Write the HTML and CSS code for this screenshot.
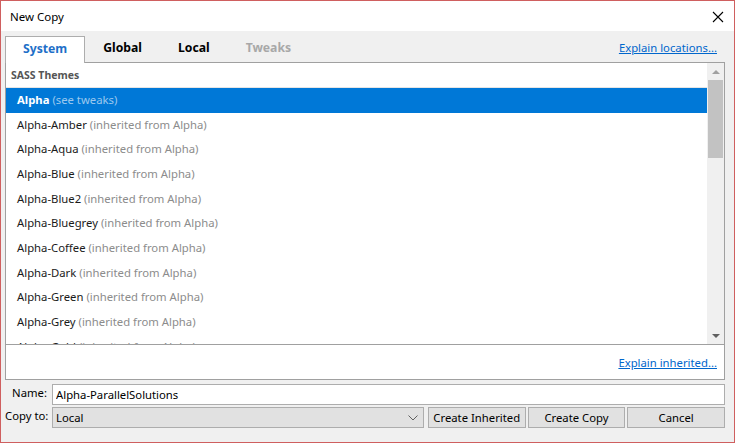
FILE: index.html
```html
<!DOCTYPE html>
<html lang="en">
  <head>
    <meta charset="UTF-8" />
    <title>New Copy</title>
    <link rel="stylesheet" href="styles.css">
  </head>
  <body>
    <div class="dialog">
      <div class="titlebar">
        <span class="title">New Copy</span>
        <span class="close">
          <svg width="12" height="12" viewBox="0 0 12 12">
            <path d="M1 1 L11 11 M11 1 L1 11" stroke="#000" stroke-width="1.1" fill="none" />
          </svg>
        </span>
      </div>

      <div class="content">
        <div class="tabs">
          <div class="tab active">System</div>
          <div class="tab">Global</div>
          <div class="tab">Local</div>
          <div class="tab disabled">Tweaks</div>
          <a class="link tabs-link" href="#">Explain locations...</a>
        </div>

        <div class="panel">
          <div class="listbox">
            <div class="list">
              <div class="list-header">SASS Themes</div>
              <div class="row selected"><span class="name">Alpha</span> <span class="note">(see tweaks)</span></div>
              <div class="row"><span class="name">Alpha-Amber</span> <span class="note">(inherited from Alpha)</span></div>
              <div class="row"><span class="name">Alpha-Aqua</span> <span class="note">(inherited from Alpha)</span></div>
              <div class="row"><span class="name">Alpha-Blue</span> <span class="note">(inherited from Alpha)</span></div>
              <div class="row"><span class="name">Alpha-Blue2</span> <span class="note">(inherited from Alpha)</span></div>
              <div class="row"><span class="name">Alpha-Bluegrey</span> <span class="note">(inherited from Alpha)</span></div>
              <div class="row"><span class="name">Alpha-Coffee</span> <span class="note">(inherited from Alpha)</span></div>
              <div class="row"><span class="name">Alpha-Dark</span> <span class="note">(inherited from Alpha)</span></div>
              <div class="row"><span class="name">Alpha-Green</span> <span class="note">(inherited from Alpha)</span></div>
              <div class="row"><span class="name">Alpha-Grey</span> <span class="note">(inherited from Alpha)</span></div>
              <div class="row"><span class="name">Alpha-Gold</span> <span class="note">(inherited from Alpha)</span></div>
            </div>
            <div class="scrollbar">
              <div class="arrow up"></div>
              <div class="track"><div class="thumb"></div></div>
              <div class="arrow down"></div>
            </div>
          </div>
          <div class="panel-foot">
            <a class="link" href="#">Explain inherited...</a>
          </div>
        </div>

        <div class="form">
          <div class="form-row">
            <label class="label">Name:</label>
            <input class="input" type="text" value="Alpha-ParallelSolutions" />
          </div>
          <div class="form-row">
            <label class="label">Copy to:</label>
            <div class="select">
              <span>Local</span>
              <svg width="10" height="6" viewBox="0 0 10 6">
                <path d="M0.5 0.5 L5 5 L9.5 0.5" stroke="#606060" stroke-width="1" fill="none" />
              </svg>
            </div>
            <button class="btn">Create Inherited</button>
            <button class="btn">Create Copy</button>
            <button class="btn">Cancel</button>
          </div>
        </div>
      </div>
    </div>
  </body>
</html>
```

FILE: styles.css
```css
* {
  margin: 0;
  padding: 0;
  box-sizing: border-box;
  font-family: "Noto Sans", "Open Sans", sans-serif;
}

body {
  background: #fff;
  font-size: 11.3px;
  color: #000;
}

.dialog {
  width: 735px;
  height: 443px;
  border: 1px solid #cf5f5f;
  display: flex;
  flex-direction: column;
  background: #f0f0f0;
}

.titlebar {
  height: 30px;
  background: #fff;
  display: flex;
  align-items: center;
  justify-content: space-between;
  padding: 0 10px 0 9px;
}

.title {
  font-size: 11.5px;
  color: #000;
}

.close {
  display: flex;
  margin-top: 1px;
}

.content {
  flex: 1;
  padding: 4px 9px 0 4px;
  display: flex;
  flex-direction: column;
}

/* tab strip */
.tabs {
  display: flex;
  align-items: flex-end;
  height: 27px;
}

.tab {
  height: 26px;
  padding: 0 18px 3px;
  font-weight: bold;
  font-size: 12.2px;
  display: flex;
  align-items: center;
  color: #000;
}

.tab.active {
  height: 27px;
  padding: 0 17px 3px;
  background: #fff;
  border: 1px solid #adadad;
  border-bottom: none;
  color: #1e70c8;
  margin-bottom: -1px;
  position: relative;
  z-index: 1;
}

.tab.disabled {
  color: #a8a8a8;
}

.link {
  color: #0066cc;
  text-decoration: underline;
  font-size: 11.3px;
}

.tabs-link {
  margin-left: auto;
  margin-right: 8px;
  align-self: center;
  margin-bottom: 2px;
}

/* tab page */
.panel {
  height: 318px;
  background: #fff;
  border: 1px solid #a0a0a0;
  display: flex;
  flex-direction: column;
}

.listbox {
  height: 282px;
  display: flex;
  border-bottom: 1px solid #a0a0a0;
}

.list {
  flex: 1;
  overflow: hidden;
}

.list-header {
  height: 25px;
  line-height: 24px;
  padding-left: 5px;
  font-size: 10.5px;
  font-weight: bold;
  color: #555;
  border-bottom: 1px solid #e5e5e5;
}

.row {
  height: 24.67px;
  line-height: 24px;
  padding-left: 11px;
  white-space: nowrap;
  color: #1a1a1a;
}

.row .note {
  color: #8c8c8c;
}

.row.selected {
  background: #0078d7;
  color: #fff;
}

.row.selected .name {
  font-weight: bold;
}

.row.selected .note {
  color: #9cc8ee;
}

.scrollbar {
  width: 17px;
  background: #f0f0f0;
  display: flex;
  flex-direction: column;
}

.arrow {
  height: 17px;
  display: flex;
  align-items: center;
  justify-content: center;
}

.arrow::before {
  content: "";
  border-left: 4px solid transparent;
  border-right: 4px solid transparent;
}

.arrow.up::before {
  border-bottom: 4px solid #a0a0a0;
}

.arrow.down::before {
  border-top: 4px solid #606060;
}

.track {
  flex: 1;
  padding: 0 1px;
}

.thumb {
  height: 78px;
  background: #c2c2c2;
}

.panel-foot {
  flex: 1;
  display: flex;
  align-items: center;
  justify-content: flex-end;
  padding-right: 7px;
  padding-top: 1px;
}

/* name / destination fields */
.form {
  padding-top: 4px;
  display: flex;
  flex-direction: column;
  gap: 2px;
}

.form-row {
  display: flex;
  align-items: center;
  height: 21px;
}

.label {
  width: 42px;
  margin-right: 5px;
  text-align: right;
  white-space: nowrap;
  color: #000;
  margin-top: -5px;
}

.input {
  flex: 1;
  height: 21px;
  border: 1px solid #adadad;
  background: #fff;
  padding: 0 3px;
  font-size: 11.3px;
  color: #000;
  outline: none;
}

.select {
  width: 373px;
  height: 21px;
  border: 1px solid #adadad;
  background: #e1e1e1;
  display: flex;
  align-items: center;
  justify-content: space-between;
  padding: 0 5px 0 3px;
  margin-right: 2px;
}

.btn {
  width: 98px;
  height: 21px;
  margin-left: 2px;
  border: 1px solid #adadad;
  background: #e1e1e1;
  font-size: 11.3px;
  color: #000;
}
```
